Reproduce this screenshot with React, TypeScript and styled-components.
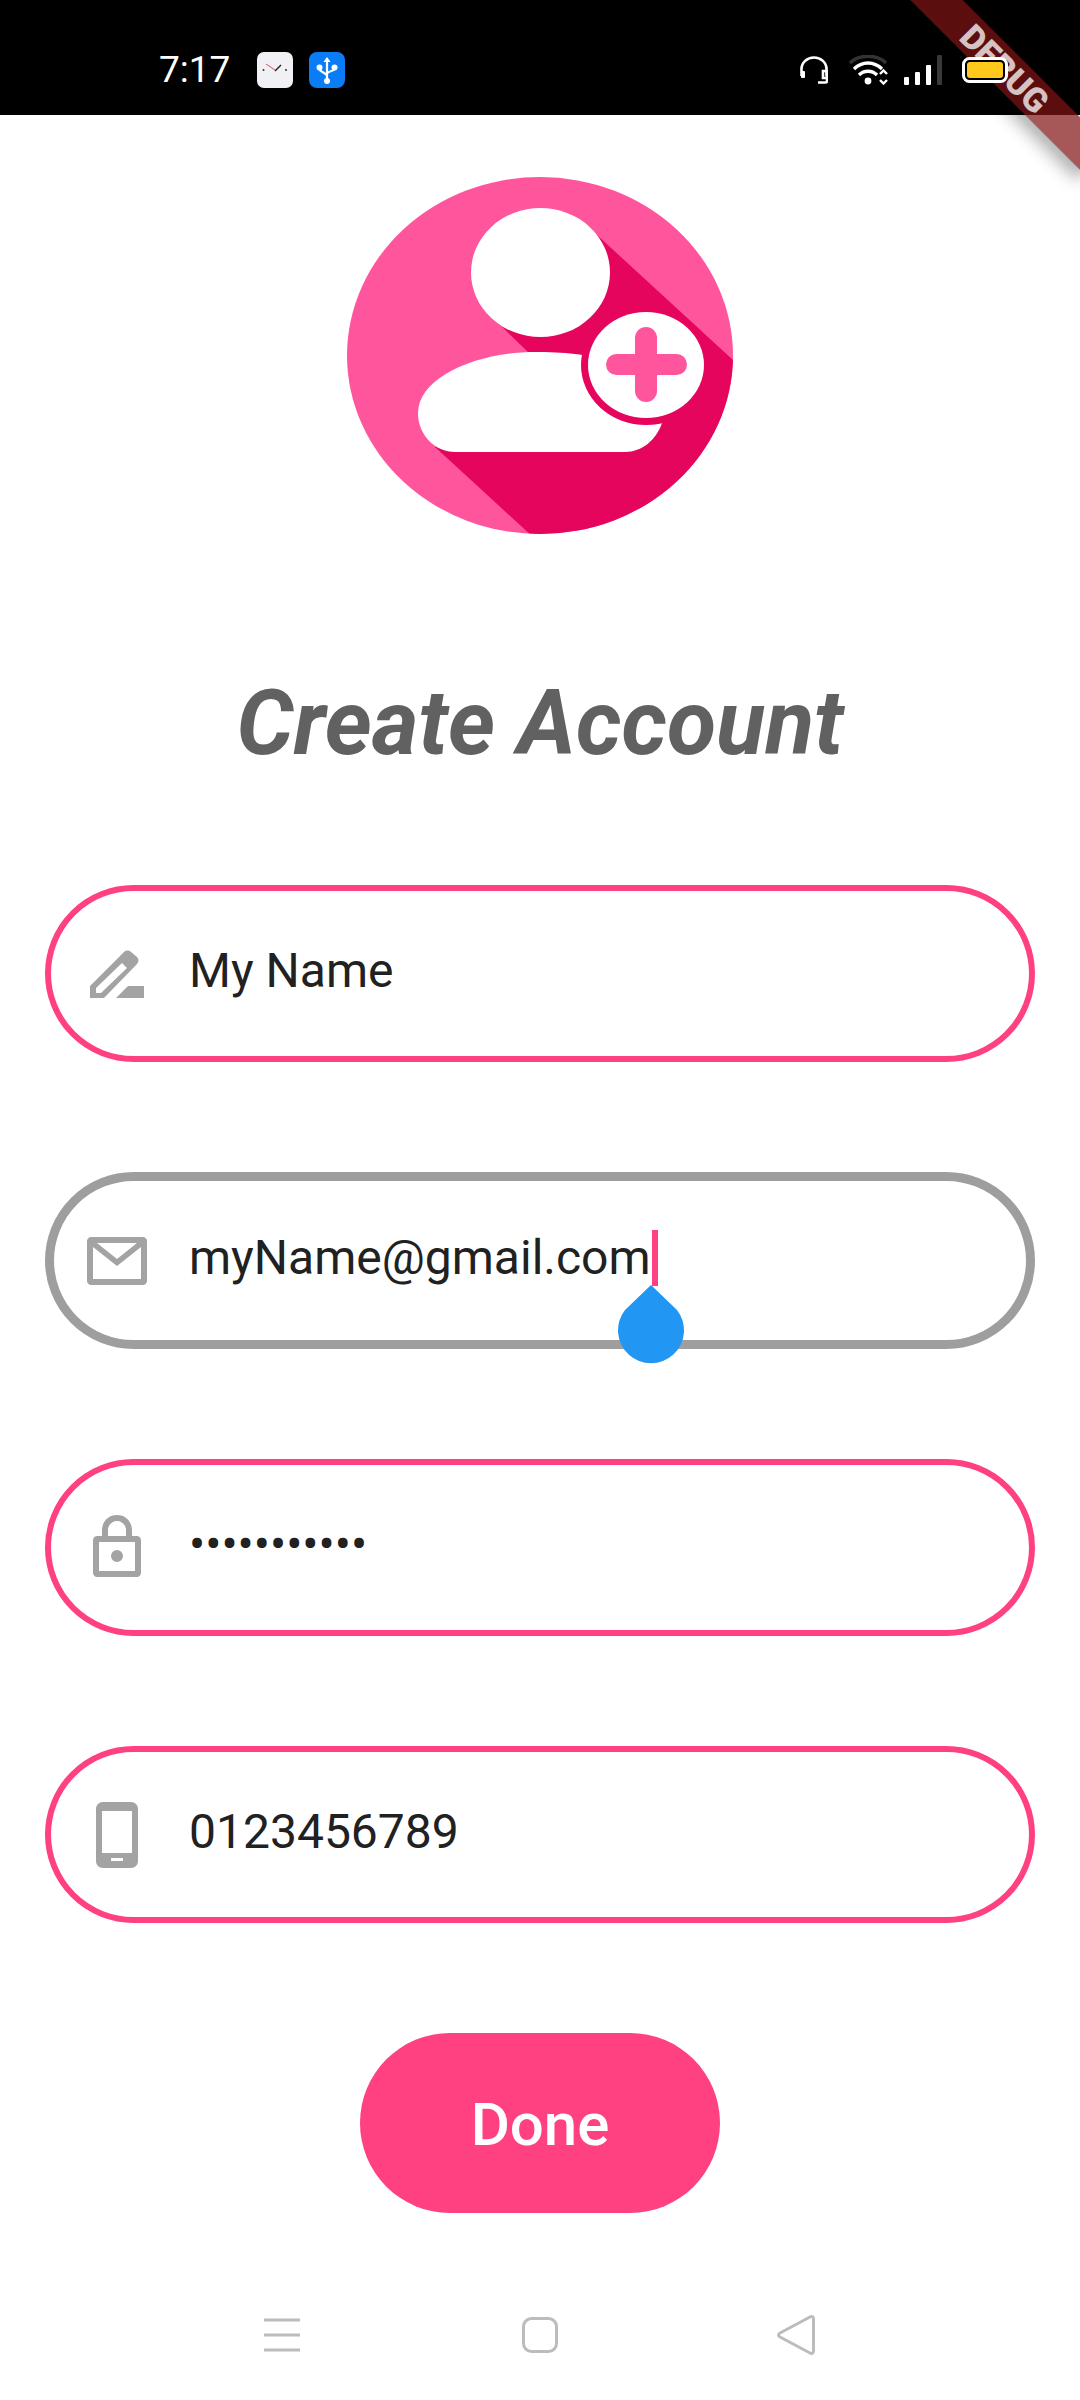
import React from "react";
import styled, { createGlobalStyle } from "styled-components";

const Global = createGlobalStyle`
  html, body { margin: 0; padding: 0; background: #fff; }
  body { font-family: Roboto, "Liberation Sans", sans-serif; }
  #root { width: 1080px; height: 2400px; overflow: hidden; }
`;

const Screen = styled.div`
  position: relative;
  width: 1080px;
  height: 2400px;
  background: #fff;
  display: flex;
  flex-direction: column;
  overflow: hidden;
`;

const StatusBar = styled.div`
  height: 115px;
  flex: none;
  background: #000;
  display: flex;
  align-items: center;
  padding: 24px 72px 0 159px;
  box-sizing: border-box;
`;

const Time = styled.span`
  font: 400 37px/1 Roboto, sans-serif;
  color: #fff;
  width: 98px;
  flex: none;
`;

const NotifIcon = styled.svg`
  width: 36px;
  height: 36px;
  flex: none;
  margin-right: 16px;
`;

const StatusRight = styled.div`
  margin-left: auto;
  display: flex;
  align-items: center;
`;

const StatusIcon = styled.svg<{ $gap: number }>`
  flex: none;
  margin-left: ${(p) => p.$gap}px;
`;

const BatteryIcon = styled.svg`
  flex: none;
  margin-left: 20px;
  position: relative;
  z-index: 6;
`;

const Banner = styled.div`
  position: absolute;
  top: 50px;
  right: -55px;
  width: 260px;
  height: 37px;
  transform: rotate(45deg);
  background:
    linear-gradient(rgba(183, 28, 28, 0.5), rgba(183, 28, 28, 0.5)),
    linear-gradient(rgba(0, 0, 0, 0.42), rgba(0, 0, 0, 0.42));
  box-shadow: 0 10px 16px rgba(0, 0, 0, 0.3);
  display: flex;
  align-items: center;
  justify-content: center;
  font: 900 34px/1 Roboto, sans-serif;
  color: rgba(255, 255, 255, 0.75);
  z-index: 5;
`;

const Content = styled.main`
  display: flex;
  flex-direction: column;
  align-items: center;
  flex: 1;
`;

const Logo = styled.svg`
  width: 386px;
  height: 357px;
  margin-top: 62px;
  flex: none;
`;

const Title = styled.h1`
  margin: 140px 0 0;
  height: 100px;
  font: italic 700 90px/100px Roboto, sans-serif;
  color: #616161;
  white-space: nowrap;
`;

const Form = styled.div`
  margin-top: 111px;
  width: 990px;
  display: flex;
  flex-direction: column;
  gap: 110px;
`;

const Field = styled.div<{ $focused?: boolean }>`
  height: 177px;
  box-sizing: border-box;
  border: ${(p) => (p.$focused ? "9px solid #9e9e9e" : "6px solid #ff4081")};
  border-radius: 89px;
  background: #fff;
  display: flex;
  align-items: center;
  padding-left: ${(p) => (p.$focused ? 33 : 36)}px;
`;

const IconSlot = styled.div`
  width: 60px;
  height: 70px;
  flex: none;
  display: flex;
  align-items: center;
  justify-content: center;
  margin-right: 42px;
  svg { display: block; fill: #a3a3a3; }
`;

const Value = styled.div`
  font: 400 48px/56px Roboto, sans-serif;
  color: #212121;
  padding-bottom: 6px;
  display: flex;
  align-items: center;
  white-space: nowrap;
`;

const Caret = styled.span`
  position: relative;
  display: block;
  width: 6px;
  height: 56px;
  margin-left: 1px;
  background: #ff4081;
`;

const Handle = styled.svg`
  position: absolute;
  left: -34px;
  top: 55px;
  width: 66px;
  height: 79px;
  fill: #2196f3;
`;

const DoneButton = styled.button`
  margin-top: 110px;
  width: 360px;
  height: 180px;
  border: 0;
  border-radius: 90px;
  background: #ff4081;
  color: #fff;
  font: 500 60px/1 Roboto, sans-serif;
  padding: 3px 0 0;
  flex: none;
`;

const NavBar = styled.nav`
  margin-top: 100px;
  display: grid;
  grid-template-columns: repeat(3, 258px);
  justify-items: center;
  align-items: center;
  height: 44px;
  svg { display: block; stroke: #bcbcbc; fill: none; }
  svg:last-child { margin-right: 5px; }
`;

export default function App() {
  return (
    <Screen>
      <Global />
      <StatusBar>
        <Time>7:17</Time>
        <NotifIcon viewBox="0 0 36 36">
          <rect width="36" height="36" rx="7" fill="#f1f1f5" />
          <path d="M18 18L9 12" stroke="#d8505a" strokeWidth="1" />
          <path d="M18 19L24 13" stroke="#222" strokeWidth="1.4" />
          <circle cx="6.500" cy="18" r="1" fill="#333" />
          <circle cx="29" cy="18" r="1" fill="#333" />
        </NotifIcon>
        <NotifIcon viewBox="0 0 36 36">
          <rect width="36" height="36" rx="8" fill="#0a7cf5" />
          <path d="M18 6v24M10.500 16v1c0 3 7.500 4 7.500 7M25.500 16v1c0 2-7.500 2-7.500 5" stroke="#fff" strokeWidth="2.2" fill="none" />
          <path d="M18 5l-3.500 5h7z" fill="#fff" />
          <circle cx="10.500" cy="15.500" r="3" fill="#fff" />
          <circle cx="25.500" cy="15.500" r="3" fill="#fff" />
          <circle cx="18" cy="29" r="3" fill="#fff" />
        </NotifIcon>
        <StatusRight>
          <StatusIcon $gap={0} width="28" height="28" viewBox="0 0 28 28" fill="none" stroke="#fff" strokeWidth="2.6">
            <path d="M1.500 20V13a12.500 11.500 0 0 1 25 0v7" />
            <rect x="1" y="15" width="4" height="7" fill="#fff" stroke="none" rx="1" />
            <path d="M23 15h4v7h-4zM27 20v5c0 1-1 1.500-2 1.500h-7" />
          </StatusIcon>
          <StatusIcon $gap={21} width="39" height="30" viewBox="0 0 39 30" fill="none" strokeWidth="3.400">
            <path d="M1 8C10 -1 28 -1 37 8" stroke="#333" />
            <path d="M5 14C13 6 25 6 33 14" stroke="#fff" />
            <path d="M10 20C15 15 23 15 28 20" stroke="#fff" />
            <circle cx="19" cy="26" r="3.400" fill="#fff" />
            <path d="M31 19l3.500-3.500 3.500 3.500M31 25l3.500 3.500 3.500-3.500" stroke="#fff" strokeWidth="2.400" />
          </StatusIcon>
          <StatusIcon $gap={16} width="38" height="30" viewBox="0 0 38 30">
            <rect x="0" y="22" width="5" height="8" rx="1" fill="#fff" />
            <rect x="11" y="17" width="5" height="13" rx="1" fill="#fff" />
            <rect x="22" y="10" width="5" height="20" rx="1" fill="#fff" />
            <rect x="33" y="0" width="5" height="30" rx="1" fill="#3a3a3a" />
          </StatusIcon>
          <BatteryIcon width="46" height="26" viewBox="0 0 46 26">
            <rect x="1.500" y="1.500" width="43" height="23" rx="6" fill="#000" stroke="#fff" strokeWidth="3" />
            <rect x="5" y="5" width="36" height="16" rx="3" fill="#ffc81a" />
          </BatteryIcon>
        </StatusRight>
      </StatusBar>
      <Banner>DEBUG</Banner>
      <Content>
        <Logo viewBox="347 177 386 357">
          <defs>
            <clipPath id="disc">
              <ellipse cx="540" cy="355.500" rx="193" ry="178.500" />
            </clipPath>
          </defs>
          <ellipse cx="540" cy="355.500" rx="193" ry="178.500" fill="#ff559c" />
          <g clipPath="url(#disc)">
            <path d="M597 235L733 360V560H558L435 447L500 400L528 352L498 323Z" fill="#e5055c" />
          </g>
          <ellipse cx="540.500" cy="272.500" rx="69.500" ry="64.500" fill="#fff" />
          <path d="M418 413C418 378 475 352 535 352C590 352 640 358 662 423C656 440 642 452 625 452H455C435 452 418 435 418 413Z" fill="#fff" />
          <ellipse cx="646" cy="365" rx="65" ry="60" fill="#e5055c" />
          <ellipse cx="646" cy="365" rx="58" ry="53" fill="#fff" />
          <rect x="606" y="354" width="81" height="21" rx="10.500" fill="#ff559c" />
          <rect x="635" y="327" width="22" height="75" rx="11" fill="#ff559c" />
        </Logo>
        <Title>Create Account</Title>
        <Form>
          <Field>
            <IconSlot>
              <svg width="54" height="48" viewBox="0 0 54 48">
                <path fillRule="evenodd" d="M0 36L34 2c2-2 5-2 7 0l6 5c2 2 2 5 0 7L14 48H0zM6 38L32 13L37 18L11 43H6z" />
                <path d="M26 48L38 36H54V48z" />
              </svg>
            </IconSlot>
            <Value>My Name</Value>
          </Field>
          <Field $focused>
            <IconSlot>
              <svg width="60" height="48" viewBox="0 0 60 48">
                <path fillRule="evenodd" d="M4 0h52c2 0 4 2 4 4v40c0 2-2 4-4 4H4c-2 0-4-2-4-4V4c0-2 2-4 4-4zM6 10v32h48V10L30 29zM10 6l20 16L50 6z" />
              </svg>
            </IconSlot>
            <Value>
              myName@gmail.com
              <Caret>
                <Handle viewBox="0 0 66 79">
                  <path d="M33 0L59 25A33 33 0 1 1 7 25Z" />
                </Handle>
              </Caret>
            </Value>
          </Field>
          <Field>
            <IconSlot>
              <svg width="48" height="65" viewBox="0 0 48 65">
                <path fillRule="evenodd" d="M9 21V15C9 7 15 0 24 0S39 7 39 15V21H44c2 0 4 2 4 4V58c0 2-2 4-4 4H4c-2 0-4-2-4-4V25c0-2 2-4 4-4zM15 21H33V15C33 10 29 6 24 6S15 10 15 15zM6 27V56H42V27zM24 35a6 6 0 1 1 0 12a6 6 0 1 1 0-12z" />
              </svg>
            </IconSlot>
            <Value>•••••••••••</Value>
          </Field>
          <Field>
            <IconSlot>
              <svg width="42" height="66" viewBox="0 0 42 66">
                <path fillRule="evenodd" d="M7 0H35c4 0 7 3 7 7V59c0 4-3 7-7 7H7c-4 0-7-3-7-7V7C0 3 3 0 7 0zM6 9V51H36V9zM15 56v3H27V56z" />
              </svg>
            </IconSlot>
            <Value>0123456789</Value>
          </Field>
        </Form>
        <DoneButton>Done</DoneButton>
        <NavBar>
          <svg width="36" height="34" viewBox="0 0 36 34" strokeWidth="3">
            <path d="M0 2H36M0 17H36M0 32H36" />
          </svg>
          <svg width="36" height="36" viewBox="0 0 36 36" strokeWidth="3">
            <rect x="1.500" y="1.500" width="33" height="33" rx="8" />
          </svg>
          <svg width="38" height="40" viewBox="0 0 38 40" strokeWidth="3">
            <path d="M33 2c2-1 3.500 0 3.500 2V36c0 2-1.500 3-3.500 2L3 22c-2-1-2-3 0-4z" />
          </svg>
        </NavBar>
      </Content>
    </Screen>
  );
}
